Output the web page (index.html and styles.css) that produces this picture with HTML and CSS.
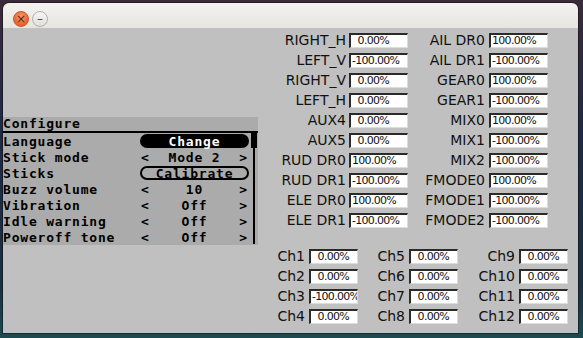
FILE: index.html
```html
<!DOCTYPE html>
<html lang="en">
<head>
  <meta charset="UTF-8">
  <title>Simulator</title>
  <link rel="stylesheet" href="styles.css">
</head>
<body>
  <div class="window">
    <div class="titlebar">
      <span class="wbtn close">&#215;</span>
      <span class="wbtn minimize">&#8211;</span>
    </div>

    <div class="content">
      <div class="lcd-col">
        <div class="lcd">
          <div class="lcd-title">Configure</div>
          <div class="lcd-body">
            <div class="lcd-rows">
              <div class="lcd-row"><span class="name">Language</span><span class="val pill filled">Change</span></div>
              <div class="lcd-row"><span class="name">Stick mode</span><span class="val"><i>&lt;</i>Mode 2<i>&gt;</i></span></div>
              <div class="lcd-row"><span class="name">Sticks</span><span class="val pill">Calibrate</span></div>
              <div class="lcd-row"><span class="name">Buzz volume</span><span class="val"><i>&lt;</i>10<i>&gt;</i></span></div>
              <div class="lcd-row"><span class="name">Vibration</span><span class="val"><i>&lt;</i>Off<i>&gt;</i></span></div>
              <div class="lcd-row"><span class="name">Idle warning</span><span class="val"><i>&lt;</i>Off<i>&gt;</i></span></div>
              <div class="lcd-row"><span class="name">Poweroff tone</span><span class="val"><i>&lt;</i>Off<i>&gt;</i></span></div>
            </div>
            <div class="scroll"><div class="thumb"></div></div>
          </div>
        </div>
      </div>

      <div class="panel">
        <div class="inputs">
          <span class="lbl">RIGHT_H</span><span class="box">  0.00%</span>
          <span class="lbl">AIL DR0</span><span class="box">100.00%</span>
          <span class="lbl">LEFT_V</span><span class="box">-100.00%</span>
          <span class="lbl">AIL DR1</span><span class="box">-100.00%</span>
          <span class="lbl">RIGHT_V</span><span class="box">  0.00%</span>
          <span class="lbl">GEAR0</span><span class="box">100.00%</span>
          <span class="lbl">LEFT_H</span><span class="box">  0.00%</span>
          <span class="lbl">GEAR1</span><span class="box">-100.00%</span>
          <span class="lbl">AUX4</span><span class="box">  0.00%</span>
          <span class="lbl">MIX0</span><span class="box">100.00%</span>
          <span class="lbl">AUX5</span><span class="box">  0.00%</span>
          <span class="lbl">MIX1</span><span class="box">-100.00%</span>
          <span class="lbl">RUD DR0</span><span class="box">100.00%</span>
          <span class="lbl">MIX2</span><span class="box">-100.00%</span>
          <span class="lbl">RUD DR1</span><span class="box">-100.00%</span>
          <span class="lbl">FMODE0</span><span class="box">100.00%</span>
          <span class="lbl">ELE DR0</span><span class="box">100.00%</span>
          <span class="lbl">FMODE1</span><span class="box">-100.00%</span>
          <span class="lbl">ELE DR1</span><span class="box">-100.00%</span>
          <span class="lbl">FMODE2</span><span class="box">-100.00%</span>
        </div>

        <div class="channels">
          <span class="lbl">Ch1</span><span class="box">  0.00%</span>
          <span class="lbl">Ch5</span><span class="box">  0.00%</span>
          <span class="lbl">Ch9</span><span class="box">  0.00%</span>
          <span class="lbl">Ch2</span><span class="box">  0.00%</span>
          <span class="lbl">Ch6</span><span class="box">  0.00%</span>
          <span class="lbl">Ch10</span><span class="box">  0.00%</span>
          <span class="lbl">Ch3</span><span class="box">-100.00%</span>
          <span class="lbl">Ch7</span><span class="box">  0.00%</span>
          <span class="lbl">Ch11</span><span class="box">  0.00%</span>
          <span class="lbl">Ch4</span><span class="box">  0.00%</span>
          <span class="lbl">Ch8</span><span class="box">  0.00%</span>
          <span class="lbl">Ch12</span><span class="box">  0.00%</span>
        </div>
      </div>
    </div>
  </div>
</body>
</html>
```

FILE: styles.css
```css
html, body {
  margin: 0;
  height: 338px;
  overflow: hidden;
}
body {
  background: linear-gradient(180deg, #3a2a3a 0%, #1f2a44 40%, #1c3040 85%, #1d4a50 100%);
  font-family: "DejaVu Sans", sans-serif;
}
.window {
  margin: 3px 0 0 3px;
  width: 575px;
  height: 330px;
  border-radius: 6px 6px 0 0;
  box-shadow: 0 0 0 1px rgba(0,0,0,0.35);
  display: flex;
  flex-direction: column;
}
.titlebar {
  height: 25px;
  flex: none;
  background: linear-gradient(180deg, #f4f2ef, #e8e5e0);
  border-radius: 6px 6px 0 0;
  display: flex;
  align-items: flex-start;
  padding: 8px 0 0 10px;
  box-sizing: border-box;
  gap: 3px;
}
.wbtn {
  width: 16px;
  height: 16px;
  border-radius: 50%;
  box-sizing: border-box;
  display: flex;
  align-items: center;
  justify-content: center;
  font-size: 12px;
  line-height: 1;
}
.close {
  background: radial-gradient(circle at 50% 35%, #f89a70, #e8622e 70%);
  border: 1px solid #c8562a;
  color: #5a2a18;
}
.minimize {
  background: linear-gradient(180deg, #f7f6f4, #e2dfda);
  border: 1px solid #b4b0aa;
  color: #4a4845;
}
.content {
  flex: 1;
  background: #c0c0c0;
  display: flex;
}

/* lcd screen */
.lcd-col {
  width: 255px;
  padding-top: 89px;
}
.lcd {
  background: #ababab;
  font-family: "DejaVu Sans Mono", monospace;
  font-weight: bold;
  font-size: 13px;
  letter-spacing: 0.8px;
  color: #000;
}
.lcd-title {
  height: 14px;
  line-height: 14px;
  border-bottom: 2px solid #000;
}
.lcd-body {
  display: flex;
}
.lcd-rows {
  flex: 1;
}
.lcd-row {
  height: 16px;
  display: flex;
  align-items: center;
}
.lcd-row .name {
  flex: 1;
}
.val {
  width: 109px;
  height: 14px;
  margin-right: 2px;
  box-sizing: border-box;
  display: flex;
  align-items: center;
  justify-content: space-between;
  padding: 0 1px;
}
.val i {
  font-style: normal;
}
.pill {
  justify-content: center;
  border: 2px solid #000;
  border-radius: 7px;
}
.pill.filled {
  background: #000;
  color: #fff;
}
.scroll {
  width: 7px;
  position: relative;
}
.scroll::before {
  content: "";
  position: absolute;
  left: 2px;
  top: 0;
  bottom: 1px;
  width: 2px;
  background: #000;
}
.thumb {
  position: absolute;
  left: 0;
  top: 0;
  width: 6px;
  height: 15px;
  background: #000;
}

/* value panel */
.panel {
  padding: 5px 0 0 4px;
}
.inputs,
.channels {
  display: grid;
  grid-auto-rows: 15px;
  row-gap: 5px;
}
.inputs {
  grid-template-columns: 87px 59px 81px 59px;
}
.channels {
  margin-top: 21px;
  grid-template-columns: 47px 49px 51px 49px 61px 49px;
}
.lbl {
  font-size: 14px;
  line-height: 15px;
  text-align: right;
  padding-right: 4px;
  color: #111;
  white-space: nowrap;
}
.inputs .lbl:nth-child(4n+1) {
  padding-right: 3px;
}
.box {
  background: #fff;
  border-style: solid;
  border-width: 2px 1px 1px 2px;
  border-color: #2a2a2a #dcdcdc #dcdcdc #2a2a2a;
  box-sizing: border-box;
  font-size: 11px;
  letter-spacing: -0.7px;
  line-height: 12px;
  padding-left: 1px;
  white-space: pre;
  overflow: hidden;
  color: #111;
}
```
